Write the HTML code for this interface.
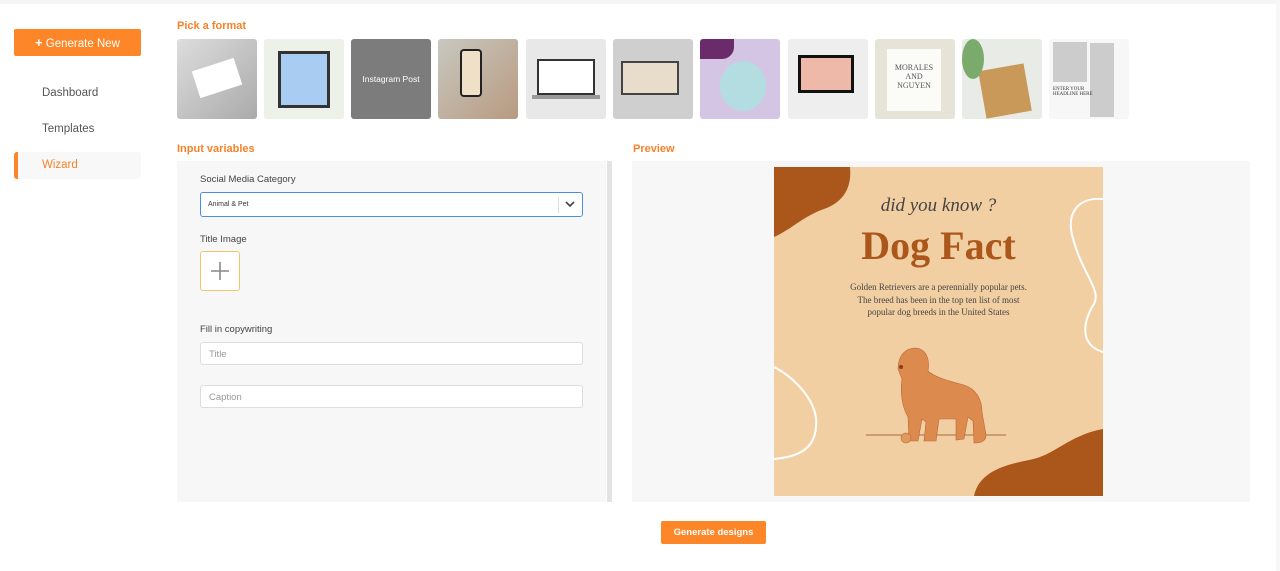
<!DOCTYPE html>
<html><head><meta charset="utf-8"><style>
*{box-sizing:border-box;margin:0;padding:0}
body{width:1280px;height:571px;background:#fff;font-family:"Liberation Sans",sans-serif;position:relative;overflow:hidden;color:#444}
.a{position:absolute}
.or{color:#f5822a;font-size:11px;font-weight:bold}
.nav{position:absolute;left:42px;font-size:11.5px;color:#555}
.th{position:absolute;top:39px;width:80px;height:80px;border-radius:3px;overflow:hidden}
.lbl{position:absolute;left:200px;font-size:9.5px;color:#444}
.inp{position:absolute;left:200px;width:383px;height:23px;background:#fff;border:1px solid #ddd;border-radius:3px;font-size:9.5px;color:#999;padding:6px 8px}
</style></head><body>
<div class="a" style="left:0;top:0;width:1280px;height:4px;background:#f5f5f5"></div>
<div class="a" style="left:1276px;top:0;width:4px;height:571px;background:#f7f7f7"></div>
<div class="a" style="left:14px;top:29px;width:127px;height:27px;background:#fd8628;border-radius:2px;color:#fff;font-size:11.5px;text-align:center;line-height:27px"><b style="font-size:13px">+</b> Generate New</div>
<div class="nav" style="top:87px">Dashboard</div>
<div class="nav" style="top:123px">Templates</div>
<div class="a" style="left:14px;top:152px;width:127px;height:27px;background:#f8f8f8;border-left:4px solid #fd8628;border-radius:3px"></div>
<div class="nav" style="top:159px;color:#f5822a">Wizard</div>
<div class="a or" style="left:177px;top:20px">Pick a format</div>
<div class="th" style="left:177px;background:linear-gradient(135deg,#ddd,#aaa)"><div class="a" style="left:18px;top:25px;width:44px;height:28px;background:#fff;transform:rotate(-18deg)"></div></div>
<div class="th" style="left:264px;background:#eef0ea"><div class="a" style="left:14px;top:12px;width:52px;height:57px;background:#a9cdf2;border:3px solid #333"></div></div>
<div class="th" style="left:351px;background:#7c7c7c;color:#fff;font-size:8.5px;text-align:center;line-height:80px">Instagram Post</div>
<div class="th" style="left:438px;background:linear-gradient(135deg,#c8c8c0,#b89a80)"><div class="a" style="left:22px;top:10px;width:22px;height:48px;background:#f1e0c8;border:2px solid #222;border-radius:4px"></div></div>
<div class="th" style="left:526px;background:#e8e8e8"><div class="a" style="left:11px;top:20px;width:58px;height:36px;background:#fff;border:2px solid #333"></div><div class="a" style="left:6px;top:56px;width:68px;height:4px;background:#999"></div></div>
<div class="th" style="left:613px;background:#cfcfcf"><div class="a" style="left:8px;top:22px;width:58px;height:34px;background:#e8dccb;border:2px solid #444"></div></div>
<div class="th" style="left:700px;background:#d3c5e3"><div class="a" style="left:0;top:0;width:34px;height:20px;background:#6b2a6a;border-radius:0 0 12px 0"></div><div class="a" style="left:20px;top:22px;width:46px;height:50px;background:#b4dde2;border-radius:50%"></div></div>
<div class="th" style="left:788px;background:#eee"><div class="a" style="left:10px;top:16px;width:56px;height:38px;background:#eeb9a8;border:3px solid #111"></div></div>
<div class="th" style="left:875px;background:#e6e4d7"><div class="a" style="left:12px;top:10px;width:54px;height:62px;background:#fbfbf7;color:#555;font:8px 'Liberation Serif',serif;text-align:center;padding-top:14px">MORALES<br>AND<br>NGUYEN</div></div>
<div class="th" style="left:962px;background:#e9ece6"><div class="a" style="left:20px;top:28px;width:46px;height:48px;background:#c9995a;transform:rotate(-10deg)"></div><div class="a" style="left:0;top:0;width:22px;height:40px;background:#7bab6c;border-radius:50%"></div></div>
<div class="th" style="left:1049px;background:#f7f7f7"><div class="a" style="left:4px;top:3px;width:34px;height:40px;background:#ccc"></div><div class="a" style="left:41px;top:4px;width:24px;height:74px;background:#ccc"></div><div class="a" style="left:4px;top:48px;font:5px 'Liberation Serif',serif;color:#333">ENTER YOUR<br>HEADLINE HERE</div></div>

<div class="a or" style="left:177px;top:143px">Input variables</div>
<div class="a" style="left:177px;top:161px;width:429px;height:341px;background:#f7f7f7"></div>
<div class="a" style="left:607px;top:161px;width:5px;height:341px;background:#e3e3e3"></div>
<div class="lbl" style="top:174px">Social Media Category</div>
<div class="a" style="left:200px;top:192px;width:383px;height:25px;background:#fff;border:1.5px solid #4a90e2;border-radius:3px;font-size:7px;color:#333;padding:8px 7px">Animal &amp; Pet</div>
<div class="a" style="left:558px;top:197px;width:1px;height:16px;background:#ddd"></div>
<svg class="a" style="left:565px;top:200px" width="10" height="8"><path d="M1 2l4 4 4-4" stroke="#444" stroke-width="1.6" fill="none"/></svg>
<div class="lbl" style="top:234px">Title Image</div>
<div class="a" style="left:200px;top:251px;width:40px;height:40px;background:#fff;border:1px solid #f3c66c;border-radius:3px"></div>
<svg class="a" style="left:210px;top:261px" width="20" height="20"><path d="M10 1v18M1 10h18" stroke="#888" stroke-width="1.6"/></svg>
<div class="lbl" style="top:324px">Fill in copywriting</div>
<div class="inp" style="top:342px">Title</div>
<div class="inp" style="top:385px">Caption</div>

<div class="a or" style="left:633px;top:143px">Preview</div>
<div class="a" style="left:632px;top:161px;width:618px;height:341px;background:#f7f7f7"></div>
<div class="a" style="left:774px;top:167px;width:329px;height:329px;background:#f2cfa2;overflow:hidden">
<svg class="a" style="left:0;top:0" width="329" height="329"><path d="M0 0H76C78 20 70 35 50 42C28 50 18 62 0 70Z" fill="#ab561b"/><path d="M200 329C205 305 230 298 255 293C280 289 295 268 329 262V329Z" fill="#ab561b"/><path d="M329 32C305 30 290 45 300 75C310 110 330 125 318 140C305 165 312 180 329 185" stroke="#fff" stroke-width="2" fill="none"/><path d="M0 200C20 210 45 235 42 260C40 285 20 290 0 292" stroke="#fff" stroke-width="2" fill="none"/>
<path d="M92 268H232" stroke="#a76a44" stroke-width="1"/>
<path d="M124 202C124 190 130 181 142 181C152 182 156 192 154 204C160 210 175 214 190 218C202 222 208 232 208 245L212 268C212 275 206 276 200 276L199 254L194 250L190 272L182 273L182 252L165 252L162 274L150 274L152 255L148 252L144 274L135 274L134 250C128 240 126 225 128 212Z" fill="#dd8a4e" stroke="#b8683a" stroke-width="0.6"/>
<circle cx="132" cy="271" r="5" fill="#e09a5e" stroke="#b8683a" stroke-width="0.6"/><circle cx="127" cy="200" r="2" fill="#8a3d17"/></svg>
<div class="a" style="left:0;top:28px;width:329px;text-align:center;font:italic 19px 'Liberation Serif',serif;color:#444">did you know ?</div>
<div class="a" style="left:0;top:55px;width:329px;text-align:center;font:bold 40px 'Liberation Serif',serif;color:#ab561b">Dog Fact</div>
<div class="a" style="left:0;top:114px;width:329px;text-align:center;font:9px/12.5px 'Liberation Serif',serif;color:#444">Golden Retrievers are a perennially popular pets.<br>The breed has been in the top ten list of most<br>popular dog breeds in the United States</div>
</div>
<div class="a" style="left:661px;top:521px;width:105px;height:23px;background:#fd8628;border-radius:2px;color:#fff;font-size:9.5px;font-weight:bold;text-align:center;line-height:23px">Generate designs</div>
</body></html>
